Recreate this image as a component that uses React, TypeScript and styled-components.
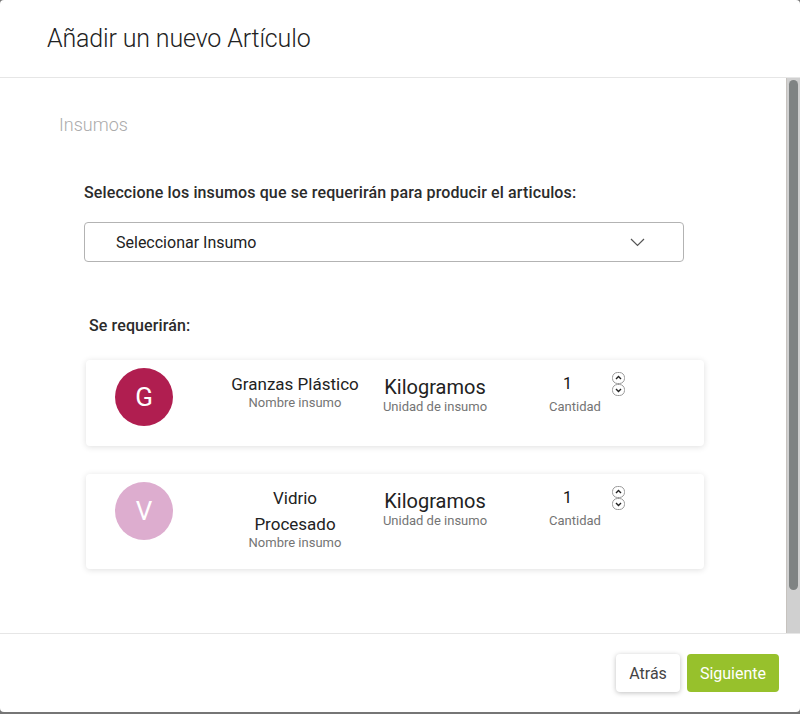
import React from "react";
import styled, { createGlobalStyle } from "styled-components";

const Global = createGlobalStyle`
  html, body { margin: 0; padding: 0; background: #767676; }
  body { font-family: Roboto, "Noto Sans", sans-serif; }
  * { box-sizing: border-box; }
`;

const Modal = styled.div`
  width: 800px;
  height: 712px;
  background: #fff;
  border-radius: 4px;
  display: flex;
  flex-direction: column;
  overflow: hidden;
`;

const Header = styled.header`
  height: 78px;
  flex: none;
  border-bottom: 1px solid #e6e6e6;
  display: flex;
  align-items: center;
  padding-left: 47px;
  padding-bottom: 1px;
`;

const Title = styled.h1`
  margin: 0;
  font-family: Roboto, sans-serif;
  font-weight: 300;
  font-size: 25px;
  letter-spacing: -0.15px;
  color: #222;
`;

const BodyRow = styled.div`
  height: 555px;
  flex: none;
  display: flex;
`;

const Body = styled.main`
  flex: 1;
  overflow: hidden;
  padding: 35px 0 0 59px;
`;

const ScrollTrack = styled.div`
  width: 14px;
  flex: none;
  background: #d0d0d0;
  border-left: 1px solid #c6c2be;
  padding: 2px 2px 0 2px;
`;

const ScrollThumb = styled.div`
  width: 9px;
  height: 510px;
  border-radius: 5px;
  background: #7f8383;
`;

const SectionTitle = styled.h2`
  margin: 0;
  font-weight: 300;
  font-size: 18px;
  line-height: 24px;
  color: #ababab;
`;

const Content = styled.div`
  margin-left: 25px;
  padding-top: 46px;
  display: flex;
  flex-direction: column;
`;

const Label = styled.div<{ $indent?: number; $top?: number }>`
  font-size: 16px;
  font-weight: 500;
  line-height: 20px;
  letter-spacing: 0.12px;
  color: #2b2b2b;
  margin-left: ${(p) => p.$indent ?? 0}px;
  margin-top: ${(p) => p.$top ?? 0}px;
`;

const Select = styled.div`
  margin-top: 19px;
  width: 600px;
  height: 40px;
  border: 1px solid #b3b3b3;
  border-radius: 4px;
  display: flex;
  align-items: center;
  justify-content: space-between;
  padding: 0 38px 0 31px;
  font-size: 16px;
  color: #222;
`;

const Cards = styled.div`
  margin-top: 24px;
  margin-left: 2px;
  width: 618px;
  display: flex;
  flex-direction: column;
  gap: 28px;
`;

const Card = styled.div`
  background: #fff;
  border-radius: 4px;
  box-shadow: 0 1px 6px rgba(0, 0, 0, 0.13);
  display: flex;
  align-items: flex-start;
  padding: 8px 0 20px 29px;
`;

const Avatar = styled.div<{ $bg: string }>`
  width: 58px;
  height: 58px;
  border-radius: 50%;
  background: ${(p) => p.$bg};
  color: #fff;
  font-size: 26px;
  display: flex;
  align-items: center;
  justify-content: center;
  flex: none;
`;

const NameCol = styled.div`
  width: 150px;
  margin-left: 47px;
  padding-top: 3px;
  text-align: center;
  display: flex;
  flex-direction: column;
  align-items: center;
`;

const Name = styled.div`
  font-size: 17px;
  line-height: 26px;
  color: #222;
  width: 140px;
`;

const Sub = styled.div<{ $lh: number }>`
  font-size: 13px;
  line-height: ${(p) => p.$lh}px;
  color: #747474;
`;

const UnitCol = styled.div`
  width: 120px;
  margin-left: 5px;
  padding-top: 7px;
  text-align: center;
`;

const Unit = styled.div`
  font-size: 20px;
  line-height: 24px;
  color: #222;
`;

const QtyCol = styled.div`
  width: 70px;
  margin-left: 45px;
  padding-top: 4px;
  display: flex;
  flex-direction: column;
  align-items: center;
`;

const QtyValue = styled.div`
  font-size: 16px;
  line-height: 23px;
  color: #111;
  margin-left: -15px;
`;

const Spinner = styled.div`
  display: flex;
  flex-direction: column;
  margin-left: 2px;
  margin-top: 4px;
`;

const Footer = styled.footer`
  flex: 1;
  border-top: 1px solid #e6e6e6;
  display: flex;
  align-items: center;
  justify-content: flex-end;
  gap: 7px;
  padding-right: 21px;
`;

const Button = styled.button<{ $primary?: boolean }>`
  height: 38px;
  border: none;
  border-radius: 4px;
  font-family: Roboto, sans-serif;
  font-size: 16px;
  padding: 0 13px;
  background: ${(p) => (p.$primary ? "#97c12c" : "#fff")};
  color: ${(p) => (p.$primary ? "#fff" : "#444")};
  box-shadow: ${(p) => (p.$primary ? "none" : "0 1px 5px rgba(0,0,0,0.25)")};
`;

const Chevron = () => (
  <svg width="15" height="9" viewBox="0 0 15 9">
    <path d="M1 1 L7.5 7.5 L14 1" fill="none" stroke="#555" strokeWidth="1.2" />
  </svg>
);

const SpinBtn = ({ up }: { up?: boolean }) => (
  <svg width="13" height="12" viewBox="0 0 13 12">
    <rect x="0.5" y="0.5" width="12" height="11" rx="5" fill="#fff" stroke="#9a9a9a" />
    <path
      d={up ? "M4 7 L6.5 4.5 L9 7" : "M4 5 L6.5 7.5 L9 5"}
      fill="none"
      stroke="#222"
      strokeWidth="1.4"
    />
  </svg>
);

type Item = { letter: string; color: string; name: React.ReactNode };

const items: Item[] = [
  { letter: "G", color: "#b01e50", name: "Granzas Plástico" },
  { letter: "V", color: "#ddadcf", name: <>Vidrio<br />Procesado</> },
];

export default function App() {
  return (
    <>
      <Global />
      <Modal>
        <Header>
          <Title>Añadir un nuevo Artículo</Title>
        </Header>
        <BodyRow>
          <Body>
            <SectionTitle>Insumos</SectionTitle>
            <Content>
              <Label>Seleccione los insumos que se requerirán para producir el articulos:</Label>
              <Select>
                <span>Seleccionar Insumo</span>
                <Chevron />
              </Select>
              <Label $indent={5} $top={54}>
                Se requerirán:
              </Label>
              <Cards>
                {items.map((it) => (
                  <Card key={it.letter}>
                    <Avatar $bg={it.color}>{it.letter}</Avatar>
                    <NameCol>
                      <Name>{it.name}</Name>
                      <Sub $lh={12}>Nombre insumo</Sub>
                    </NameCol>
                    <UnitCol>
                      <Unit>Kilogramos</Unit>
                      <Sub $lh={16}>Unidad de insumo</Sub>
                    </UnitCol>
                    <QtyCol>
                      <QtyValue>1</QtyValue>
                      <Sub $lh={24}>Cantidad</Sub>
                    </QtyCol>
                    <Spinner>
                      <SpinBtn up />
                      <SpinBtn />
                    </Spinner>
                  </Card>
                ))}
              </Cards>
            </Content>
          </Body>
          <ScrollTrack>
            <ScrollThumb />
          </ScrollTrack>
        </BodyRow>
        <Footer>
          <Button>Atrás</Button>
          <Button $primary>Siguiente</Button>
        </Footer>
      </Modal>
    </>
  );
}
